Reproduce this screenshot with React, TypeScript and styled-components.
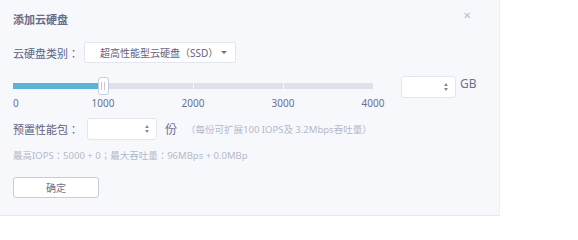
import React from "react";
import styled, { createGlobalStyle } from "styled-components";

const Global = createGlobalStyle`
  html, body { margin: 0; padding: 0; background: #ffffff; }
  body { font-family: "Noto Sans", "Noto Sans CJK JP", sans-serif; }
  * { box-sizing: border-box; }
`;

const Panel = styled.div`
  width: 500px;
  height: 216px;
  background: #f7f8fc;
  border-right: 1px solid #eef0f6;
  border-bottom: 1px solid #e6e8ef;
  padding: 12px 13px 0 13px;
  display: flex;
  flex-direction: column;
  align-items: flex-start;
`;

const Header = styled.div`
  width: 100%;
  display: flex;
  justify-content: space-between;
  align-items: flex-start;
`;

const Title = styled.div`
  font-size: 11px;
  line-height: 16px;
  font-weight: 700;
  color: #666c89;
`;

const Close = styled.span`
  font-size: 10px;
  line-height: 10px;
  color: #b9bdcc;
  margin-top: -2px;
  margin-right: 15px;
`;

const Row = styled.div<{ $top: number }>`
  display: flex;
  align-items: center;
  margin-top: ${(p) => p.$top}px;
`;

const Label = styled.span<{ $gap: number }>`
  font-size: 11px;
  color: #5d6381;
  margin-right: ${(p) => p.$gap}px;
  white-space: nowrap;
`;

const Select = styled.div`
  width: 152px;
  height: 21px;
  background: #fff;
  border: 1px solid #e3e6ef;
  border-radius: 2px;
  display: flex;
  align-items: center;
  justify-content: space-between;
  padding: 0 8px 0 15px;
  font-size: 10px;
  color: #5d6381;
`;

const Caret = styled.span`
  width: 0;
  height: 0;
  border-left: 3px solid transparent;
  border-right: 3px solid transparent;
  border-top: 3.5px solid #6a7090;
`;

const NumberBox = styled.div<{ $w: number }>`
  width: ${(p) => p.$w}px;
  height: 22px;
  background: #fff;
  border: 1px solid #e3e6ef;
  border-radius: 3px;
  display: flex;
  align-items: center;
  justify-content: flex-end;
  padding-right: 7px;
`;

const Spinner = styled.span`
  display: flex;
  flex-direction: column;
  gap: 1.5px;
  &::before, &::after {
    content: "";
    width: 0;
    height: 0;
    border-left: 2.5px solid transparent;
    border-right: 2.5px solid transparent;
  }
  &::before { border-bottom: 3px solid #868ba4; }
  &::after { border-top: 3px solid #868ba4; }
`;

const Unit = styled.span<{ $gap: number }>`
  font-size: 12px;
  line-height: 14px;
  padding-top: 1px;
  color: #6a7090;
  margin-left: ${(p) => p.$gap}px;
`;

const Hint = styled.span`
  font-size: 9.5px;
  color: #b4b8c9;
  margin-left: 9px;
  white-space: nowrap;
`;

const SliderRow = styled.div`
  display: flex;
  align-items: flex-start;
  margin-top: 13px;
`;

const SliderCol = styled.div`
  width: 360px;
  display: flex;
  flex-direction: column;
  margin-right: 28px;
`;

const TrackArea = styled.div`
  position: relative;
  height: 20px;
  display: flex;
  align-items: center;
`;

const Track = styled.div`
  position: relative;
  width: 100%;
  height: 6px;
  background: #dce1eb;
`;

const Fill = styled.div`
  position: absolute;
  left: 0;
  top: 0;
  bottom: 0;
  background: #5ab4d6;
`;

const Sep = styled.div`
  position: absolute;
  top: 0;
  bottom: 0;
  width: 1px;
  background: #f7f8fc;
`;

const Handle = styled.div`
  position: absolute;
  top: 1px;
  width: 11px;
  height: 18px;
  margin-left: -5.5px;
  background: #fff;
  border: 1px solid #c9cedc;
  border-radius: 3px;
  display: flex;
  justify-content: center;
  align-items: center;
  gap: 2px;
  &::before, &::after {
    content: "";
    width: 1px;
    height: 8px;
    background: #c4c9d8;
  }
`;

const Ticks = styled.div`
  position: relative;
  height: 12px;
  margin-top: 1px;
`;

const Tick = styled.span<{ $first: boolean }>`
  position: absolute;
  top: 0;
  font-size: 10px;
  line-height: 12px;
  color: #6a7090;
  transform: ${(p) => (p.$first ? "none" : "translateX(-50%)")};
`;

const Info = styled.div`
  margin-top: 9px;
  font-size: 9.5px;
  line-height: 14px;
  color: #b4b8c9;
  white-space: nowrap;
`;

const Button = styled.button`
  margin-top: 14px;
  width: 86px;
  height: 21px;
  background: #fff;
  border: 1px solid #c9cddb;
  border-radius: 3px;
  font-family: inherit;
  font-size: 10px;
  color: #6a7090;
  padding: 0;
`;

const MAX = 4000;
const VALUE = 1000;
const ticks = [0, 1000, 2000, 3000, 4000];

export default function App() {
  const pct = (v: number) => `${(v / MAX) * 100}%`;
  return (
    <>
      <Global />
      <Panel>
        <Header>
          <Title>添加云硬盘</Title>
          <Close>✕</Close>
        </Header>
        <Row $top={14}>
          <Label $gap={5}>云硬盘类别：</Label>
          <Select>
            <span>超高性能型云硬盘（SSD）</span>
            <Caret />
          </Select>
        </Row>
        <SliderRow>
          <SliderCol>
            <TrackArea>
              <Track>
                <Fill style={{ width: pct(VALUE) }} />
                {[1000, 2000, 3000].map((v) => (
                  <Sep key={v} style={{ left: pct(v) }} />
                ))}
              </Track>
              <Handle style={{ left: pct(VALUE) }} />
            </TrackArea>
            <Ticks>
              {ticks.map((t, i) => (
                <Tick key={t} $first={i === 0} style={{ left: pct(t) }}>
                  {t}
                </Tick>
              ))}
            </Ticks>
          </SliderCol>
          <NumberBox $w={55}>
            <Spinner />
          </NumberBox>
          <Unit $gap={4}>GB</Unit>
        </SliderRow>
        <Row $top={9}>
          <Label $gap={8}>预置性能包：</Label>
          <NumberBox $w={70}>
            <Spinner />
          </NumberBox>
          <Unit $gap={8}>份</Unit>
          <Hint>（每份可扩展100 IOPS及 3.2Mbps吞吐量）</Hint>
        </Row>
        <Info>最高IOPS：5000 + 0；最大吞吐量：96MBps + 0.0MBp</Info>
        <Button>确定</Button>
      </Panel>
    </>
  );
}
